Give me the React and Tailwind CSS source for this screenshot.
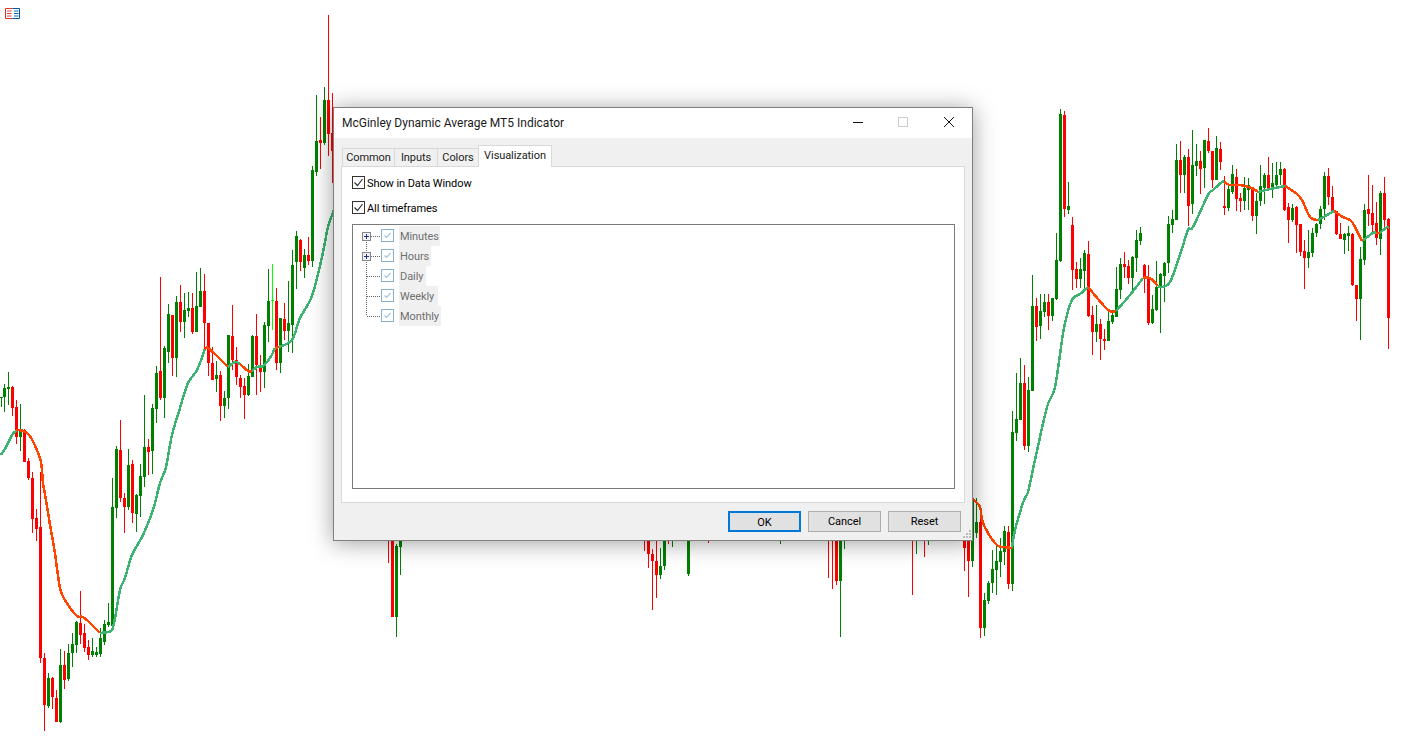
import React from 'react';

const UP = '#008000';
const DOWN = '#ff0000';

// [x, wickTop, bodyTop, bodyBottom, wickBottom, colour]
const CANDLES = [
  [1, 397, 397, 398, 407, 'g'], [4, 384, 388, 397, 412, 'g'], [8, 372, 387, 389, 405, 'g'], [12, 386, 387, 408, 416, 'r'],
  [16, 400, 407, 437, 444, 'r'], [20, 404, 430, 437, 451, 'g'], [24, 429, 431, 462, 462, 'r'], [28, 458, 461, 478, 480, 'r'],
  [32, 472, 478, 519, 533, 'r'], [36, 509, 518, 529, 541, 'r'], [40, 472, 527, 658, 663, 'r'], [44, 653, 658, 705, 731, 'r'],
  [48, 673, 678, 706, 708, 'g'], [52, 677, 678, 697, 709, 'r'], [56, 690, 698, 722, 722, 'r'], [60, 649, 665, 722, 723, 'g'],
  [64, 651, 665, 680, 689, 'r'], [68, 644, 653, 679, 681, 'g'], [72, 633, 644, 653, 667, 'g'], [76, 621, 622, 645, 653, 'g'],
  [80, 591, 623, 635, 644, 'r'], [84, 624, 633, 648, 652, 'r'], [88, 640, 647, 655, 660, 'r'], [92, 638, 651, 655, 657, 'g'],
  [96, 647, 652, 655, 657, 'g'], [100, 628, 638, 654, 657, 'g'], [104, 620, 624, 642, 645, 'g'], [108, 603, 622, 625, 627, 'g'],
  [112, 478, 507, 626, 627, 'g'], [116, 446, 449, 508, 518, 'g'], [120, 420, 450, 498, 502, 'r'], [124, 493, 498, 507, 533, 'r'],
  [128, 449, 465, 507, 510, 'g'], [132, 460, 464, 513, 523, 'r'], [136, 494, 495, 514, 532, 'g'], [140, 464, 476, 496, 517, 'g'],
  [144, 395, 447, 477, 487, 'g'], [148, 439, 447, 452, 475, 'r'], [152, 404, 408, 451, 474, 'g'], [156, 366, 373, 409, 423, 'g'],
  [160, 277, 371, 398, 400, 'r'], [164, 346, 348, 398, 418, 'g'], [168, 304, 314, 352, 363, 'g'], [172, 315, 315, 358, 376, 'r'],
  [176, 296, 302, 358, 377, 'g'], [180, 285, 302, 322, 332, 'r'], [184, 293, 310, 322, 338, 'g'], [188, 292, 308, 311, 317, 'g'],
  [192, 293, 308, 332, 334, 'r'], [196, 272, 306, 332, 332, 'g'], [200, 268, 291, 307, 307, 'g'], [204, 274, 291, 323, 350, 'r'],
  [208, 323, 323, 363, 376, 'r'], [212, 347, 363, 380, 380, 'r'], [216, 361, 375, 379, 392, 'g'], [220, 371, 375, 406, 421, 'r'],
  [224, 391, 398, 406, 418, 'g'], [228, 335, 335, 398, 409, 'g'], [232, 305, 336, 360, 370, 'r'], [236, 347, 360, 377, 385, 'r'],
  [240, 375, 378, 387, 398, 'r'], [244, 378, 386, 395, 419, 'r'], [248, 364, 376, 395, 396, 'g'], [252, 335, 336, 377, 377, 'g'],
  [256, 314, 336, 365, 395, 'r'], [260, 355, 365, 372, 392, 'r'], [264, 322, 325, 372, 388, 'g'], [268, 269, 301, 326, 342, 'g'],
  [276, 288, 301, 363, 370, 'r'], [280, 318, 318, 363, 373, 'g'], [284, 303, 319, 331, 340, 'r'], [288, 281, 323, 331, 352, 'g'],
  [292, 250, 265, 325, 353, 'g'], [296, 231, 236, 262, 289, 'g'], [300, 239, 240, 262, 271, 'r'], [304, 249, 255, 268, 278, 'g'],
  [308, 237, 255, 261, 265, 'r'], [312, 166, 170, 261, 267, 'g'], [316, 95, 141, 172, 176, 'g'], [320, 117, 140, 143, 169, 'r'],
  [324, 87, 100, 143, 145, 'g'], [328, 15, 100, 134, 156, 'r'], [332, 93, 133, 151, 183, 'r'],
  // under the dialog
  [388, 500, 500, 501, 563, 'r'], [392, 500, 500, 617, 617, 'r'], [396, 544, 546, 617, 637, 'g'], [400, 500, 500, 547, 575, 'g'],
  [644, 500, 500, 501, 551, 'r'], [648, 500, 500, 554, 568, 'r'], [652, 549, 554, 561, 610, 'r'], [656, 541, 561, 575, 598, 'r'],
  [660, 548, 566, 575, 579, 'g'], [664, 500, 500, 566, 570, 'g'], [668, 500, 500, 501, 544, 'r'], [672, 500, 500, 501, 547, 'g'],
  [688, 500, 500, 574, 576, 'g'], [696, 500, 500, 501, 541, 'r'], [708, 500, 500, 501, 543, 'r'], [780, 500, 500, 501, 544, 'g'],
  [828, 500, 500, 501, 578, 'r'], [832, 500, 500, 501, 589, 'r'], [836, 500, 500, 581, 585, 'r'], [840, 500, 500, 581, 637, 'g'],
  [844, 500, 500, 501, 549, 'g'], [912, 500, 500, 501, 595, 'r'], [916, 500, 500, 501, 554, 'g'], [924, 500, 500, 501, 557, 'r'],
  [928, 500, 500, 501, 545, 'g'], [964, 500, 500, 548, 571, 'r'], [968, 500, 500, 561, 597, 'r'], [972, 498, 500, 561, 567, 'g'],
  // right of the dialog
  [976, 498, 522, 533, 538, 'g'], [980, 512, 522, 628, 638, 'r'], [984, 593, 600, 628, 636, 'g'], [988, 581, 583, 601, 604, 'g'],
  [992, 550, 569, 583, 593, 'g'], [996, 546, 561, 570, 595, 'g'], [1000, 538, 551, 562, 577, 'g'], [1004, 526, 531, 552, 565, 'g'],
  [1008, 526, 532, 584, 589, 'r'], [1012, 411, 432, 584, 591, 'g'], [1016, 373, 419, 433, 441, 'g'], [1020, 358, 383, 420, 420, 'g'],
  [1024, 365, 383, 446, 450, 'r'], [1028, 377, 390, 446, 452, 'g'], [1032, 275, 306, 391, 391, 'g'], [1036, 298, 306, 327, 341, 'r'],
  [1040, 294, 311, 326, 339, 'g'], [1044, 294, 302, 312, 317, 'g'], [1048, 294, 302, 316, 330, 'r'], [1052, 298, 298, 316, 321, 'g'],
  [1056, 233, 260, 299, 300, 'g'], [1060, 109, 114, 261, 262, 'g'], [1064, 111, 115, 209, 217, 'r'], [1068, 182, 206, 210, 214, 'g'],
  [1072, 217, 225, 270, 290, 'r'], [1076, 262, 269, 279, 288, 'r'], [1080, 258, 269, 279, 288, 'g'], [1084, 250, 253, 271, 288, 'g'],
  [1088, 241, 254, 316, 317, 'r'], [1092, 306, 315, 332, 355, 'r'], [1096, 305, 324, 332, 342, 'g'], [1100, 319, 324, 339, 360, 'r'],
  [1104, 329, 339, 341, 350, 'r'], [1108, 309, 321, 341, 341, 'g'], [1112, 310, 315, 322, 324, 'g'], [1116, 267, 289, 317, 317, 'g'],
  [1120, 258, 264, 290, 299, 'g'], [1124, 252, 264, 267, 278, 'r'], [1128, 260, 266, 278, 284, 'r'], [1132, 256, 257, 278, 293, 'g'],
  [1136, 230, 240, 258, 272, 'g'], [1140, 227, 233, 241, 245, 'g'], [1144, 264, 265, 277, 293, 'r'], [1148, 265, 277, 323, 325, 'r'],
  [1152, 295, 309, 323, 324, 'g'], [1156, 261, 287, 310, 311, 'g'], [1160, 273, 274, 287, 333, 'g'], [1164, 262, 263, 276, 302, 'g'],
  [1168, 216, 224, 263, 273, 'g'], [1172, 210, 219, 225, 233, 'g'], [1176, 144, 160, 220, 220, 'g'], [1180, 141, 160, 175, 193, 'r'],
  [1184, 155, 157, 175, 193, 'g'], [1188, 149, 157, 206, 226, 'r'], [1192, 130, 165, 204, 214, 'g'], [1196, 144, 161, 166, 176, 'g'],
  [1200, 151, 161, 169, 194, 'r'], [1204, 140, 140, 168, 188, 'g'], [1208, 128, 141, 151, 153, 'r'], [1212, 151, 151, 180, 188, 'r'],
  [1216, 136, 148, 180, 180, 'g'], [1220, 142, 149, 162, 170, 'r'], [1224, 176, 206, 208, 215, 'r'], [1228, 183, 189, 208, 211, 'g'],
  [1232, 165, 174, 192, 194, 'g'], [1236, 169, 177, 199, 211, 'r'], [1240, 193, 198, 201, 212, 'r'], [1244, 177, 188, 201, 210, 'g'],
  [1248, 178, 185, 190, 210, 'g'], [1252, 188, 188, 216, 221, 'r'], [1256, 193, 201, 216, 234, 'g'], [1260, 165, 186, 201, 206, 'g'],
  [1264, 173, 175, 188, 204, 'g'], [1268, 157, 175, 189, 189, 'r'], [1272, 163, 183, 189, 198, 'g'], [1276, 162, 175, 185, 189, 'g'],
  [1280, 162, 169, 175, 185, 'g'], [1284, 168, 169, 210, 211, 'r'], [1288, 203, 207, 220, 243, 'r'], [1292, 204, 208, 220, 222, 'g'],
  [1296, 206, 207, 225, 253, 'r'], [1300, 224, 224, 252, 256, 'r'], [1304, 240, 251, 258, 289, 'r'], [1308, 230, 252, 258, 268, 'g'],
  [1312, 228, 233, 253, 257, 'g'], [1316, 223, 224, 233, 237, 'g'], [1320, 206, 209, 224, 229, 'g'], [1324, 172, 176, 209, 220, 'g'],
  [1328, 168, 176, 197, 205, 'r'], [1332, 186, 197, 211, 212, 'r'], [1336, 211, 211, 234, 235, 'r'], [1340, 223, 234, 239, 239, 'r'],
  [1344, 233, 234, 240, 254, 'g'], [1348, 226, 233, 236, 251, 'g'], [1352, 233, 234, 285, 286, 'r'], [1356, 285, 285, 299, 321, 'r'],
  [1360, 247, 259, 299, 340, 'g'], [1364, 204, 210, 260, 265, 'g'], [1368, 175, 209, 214, 226, 'r'], [1372, 185, 213, 225, 233, 'r'],
  [1376, 202, 223, 238, 245, 'r'], [1380, 191, 193, 239, 255, 'g'], [1384, 177, 193, 220, 228, 'r'], [1388, 218, 219, 318, 349, 'r'],
];

const GREEN_LINES = [
  [[1, 455], [6, 447], [12, 435], [16, 431]],
  [[100, 633], [108, 632], [112, 630], [115, 618], [120, 590], [125, 578], [132, 555], [143, 535], [153, 510], [160, 483], [166, 467], [172, 435], [180, 408], [188, 383], [197, 370], [205, 349]],
  [[228, 367], [235, 362], [240, 364]],
  [[252, 371], [257, 367], [263, 366], [270, 358], [275, 348]],
  [[279, 347], [292, 340], [300, 318], [312, 296], [322, 257], [328, 227], [334, 210]],
  [[1012, 548], [1015, 530], [1024, 500], [1028, 492], [1035, 460], [1047, 407], [1055, 387], [1064, 328], [1072, 300], [1080, 294], [1088, 287]],
  [[1116, 311], [1130, 295], [1143, 278]],
  [[1158, 286], [1162, 287], [1170, 282], [1180, 255], [1188, 230], [1193, 227], [1208, 195], [1213, 190], [1222, 182], [1224, 182]],
  [[1258, 192], [1270, 189], [1285, 186]],
  [[1318, 220], [1327, 215], [1334, 211]],
  [[1362, 241], [1373, 233], [1376, 233]],
  [[1380, 233], [1387, 227], [1389, 228]],
];

const ORANGE_LINES = [
  [[16, 430], [24, 431], [30, 436], [36, 448], [41, 462], [43, 483], [46, 500], [50, 525], [54, 547], [58, 575], [61, 592], [68, 605], [77, 616], [83, 617], [90, 623], [100, 633]],
  [[205, 349], [208, 348], [218, 357], [228, 367]],
  [[240, 364], [248, 371], [252, 371]],
  [[275, 348], [279, 347]],
  [[972, 498], [980, 507], [982, 520], [988, 533], [997, 545], [1003, 547], [1012, 548]],
  [[1088, 287], [1108, 310], [1116, 311]],
  [[1143, 278], [1150, 278], [1158, 286]],
  [[1224, 182], [1230, 185], [1240, 185], [1252, 188], [1258, 192]],
  [[1285, 186], [1297, 194], [1302, 200], [1310, 217], [1318, 220]],
  [[1334, 211], [1343, 217], [1352, 222], [1362, 241]],
  [[1376, 233], [1380, 233]],
];

// catmull-rom through the sampled points so the average doesn't look angular
const smooth = (pts) => {
  let d = `M${pts[0][0]} ${pts[0][1]}`;
  for (let i = 0; i < pts.length - 1; i++) {
    const p0 = pts[i - 1] || pts[i];
    const p1 = pts[i];
    const p2 = pts[i + 1];
    const p3 = pts[i + 2] || p2;
    const c1 = [p1[0] + (p2[0] - p0[0]) / 6, p1[1] + (p2[1] - p0[1]) / 6];
    const c2 = [p2[0] - (p3[0] - p1[0]) / 6, p2[1] - (p3[1] - p1[1]) / 6];
    d += `C${c1[0]} ${c1[1]} ${c2[0]} ${c2[1]} ${p2[0]} ${p2[1]}`;
  }
  return d;
};

const Chart = () => (
  <svg className="absolute inset-0" width="1402" height="755" shapeRendering="crispEdges">
    {CANDLES.map(([x, wickTop, bodyTop, bodyBottom, wickBottom, c]) => (
      <g key={x} fill={c === 'g' ? UP : DOWN}>
        <rect x={x} y={wickTop} width="1" height={wickBottom - wickTop} />
        <rect x={x - 1} y={bodyTop} width="3" height={bodyBottom - bodyTop} />
      </g>
    ))}
    <rect x="272" y="264" width="1" height="66" fill="#00ff00" />
    <rect x="271" y="300" width="3" height="1" fill="#00ff00" />
    <g fill="none" strokeWidth="2.5">
      {GREEN_LINES.map((p) => <path key={p[0].join()} d={smooth(p)} stroke="#3cb371" />)}
      {ORANGE_LINES.map((p) => <path key={p[0].join()} d={smooth(p)} stroke="#ff4500" />)}
    </g>
  </svg>
);

const Logo = () => (
  <svg className="absolute left-[5px] top-[8px]" width="15" height="11" viewBox="0 0 15 11" fill="none">
    <path d="M7.5.5H.5v10h7" stroke="#e62e24" />
    <path d="M7.5.5h7v10h-7" stroke="#0057a8" />
    <path d="M2 3h4.5M2 5.5h4.5M2 8h4.5" stroke="#d8443a" />
    <path d="M9 3h4.5M9 5.5h4.5M9 8h4.5" stroke="#1468b4" />
  </svg>
);

const Tab = ({ label, active, className }) => (
  <div
    className={`flex justify-center border-t border-l border-r border-[#d9d9d9] ${
      active ? 'h-[22px] bg-white items-start pt-[2px] relative z-10 -mb-px' : 'h-[18px] bg-[#f0f0f0] items-center pt-[2px] -ml-px'
    } ${className}`}
  >
    {label}
  </div>
);

const CheckRow = ({ label, className }) => (
  <div className={`flex items-center h-[14px] ${className}`}>
    <svg width="14" height="14" viewBox="0 0 14 14" fill="none" className="shrink-0">
      <rect x="0.5" y="0.5" width="12" height="12" fill="#fff" stroke="#333" />
      <path d="M2.5 6.5l3 3 5-6.5" stroke="#333" strokeWidth="1.2" />
    </svg>
    <span className="ml-[1px] translate-y-px text-black">{label}</span>
  </div>
);

const TreeRow = ({ label, width, plus, last, first }) => (
  <div className="flex items-center h-5">
    <svg width="28" height="20" viewBox="0 0 28 20" fill="none" className="shrink-0">
      <path
        d={last ? 'M13.5 0v10' : first ? 'M13.5 10v10' : 'M13.5 0v20'}
        stroke="#666"
        strokeDasharray="1 1"
      />
      <path d="M14 10.5h13" stroke="#666" strokeDasharray="1 1" />
      {plus && (
        <g>
          <rect x="9.5" y="6.5" width="8" height="8" fill="#eef0f4" stroke="#85858f" />
          <path d="M11 10.5h5M13.5 8v5" stroke="#24347c" />
        </g>
      )}
    </svg>
    <svg width="14" height="14" viewBox="0 0 14 14" fill="none" className="shrink-0">
      <rect x="0.5" y="0.5" width="12" height="12" fill="#fff" stroke="#86b0d2" />
      <path d="M3.5 6.5l2 2 4-4.5" stroke="#a9c4da" strokeWidth="1.2" />
    </svg>
    <span
      className="ml-[4px] h-5 leading-[22px] pl-[1px] bg-[#f0f0f0] text-[#6f6f6f]"
      style={{ width }}
    >
      {label}
    </span>
  </div>
);

const Button = ({ label, primary }) => (
  <button
    className={`w-[73px] h-[21px] bg-[#e1e1e1] pt-[2px] text-black ${
      primary ? 'border-2 border-[#0078d7]' : 'border border-[#adadad]'
    }`}
  >
    {label}
  </button>
);

export default function App() {
  return (
    <div className="relative h-[755px] w-[1402px] overflow-hidden bg-white">
      <Chart />
      <Logo />

      <div className="absolute left-[333px] top-[107px] flex h-[434px] w-[640px] flex-col border border-[#7f7f7f] bg-[#f0f0f0] font-['Roboto',sans-serif] text-[11px] tracking-[-0.08px] shadow-[0_2px_22px_rgba(0,0,0,0.38)]">
        <div className="flex h-[30px] shrink-0 items-center bg-white pl-[8px] pr-[18px]">
          <span className="text-[12px] tracking-normal text-[#1a1a1a]">McGinley Dynamic Average MT5 Indicator</span>
          <div className="mb-[2px] ml-auto flex items-center gap-[35px]">
            <svg width="10" height="10" viewBox="0 0 10 10"><path d="M0 5.5h10" stroke="#111" /></svg>
            <svg width="10" height="10" viewBox="0 0 10 10" fill="none"><rect x="0.5" y="0.5" width="9" height="9" stroke="#ccc" /></svg>
            <svg className="ml-[1px]" width="10" height="10" viewBox="0 0 10 10"><path d="M0 0l10 10M10 0L0 10" stroke="#111" /></svg>
          </div>
        </div>

        <div className="ml-[7px] mr-[7px] flex h-[28px] items-end pl-[1px] text-[#222]">
          <Tab label="Common" className="ml-0 w-[53px]" />
          <Tab label="Inputs" className="w-[44px]" />
          <Tab label="Colors" className="w-[42px]" />
          <Tab label="Visualization" active className="-ml-px w-[74px]" />
        </div>

        <div className="mx-[7px] flex h-[337px] flex-col border border-[#d9d9d9] bg-white pl-[10px] pr-[9px] pt-[9px]">
          <CheckRow label="Show in Data Window" />
          <CheckRow label="All timeframes" className="mt-[11px]" />
          <div className="mt-[9px] h-[265px] border border-[#7a7a7a] pt-[1px]">
            <TreeRow label="Minutes" width={41} plus first />
            <TreeRow label="Hours" width={32} plus />
            <TreeRow label="Daily" width={27} />
            <TreeRow label="Weekly" width={39} />
            <TreeRow label="Monthly" width={42} last />
          </div>
        </div>

        <div className="relative flex flex-1 items-start justify-end gap-[7px] pr-[11px] pt-[8px]">
          <Button label="OK" primary />
          <Button label="Cancel" />
          <Button label="Reset" />
          <svg className="absolute bottom-[1px] right-0" width="10" height="10" viewBox="0 0 10 10" fill="#bcbcbc">
            <rect x="7" y="1" width="2" height="2" />
            <rect x="4" y="4" width="2" height="2" />
            <rect x="7" y="4" width="2" height="2" />
            <rect x="1" y="7" width="2" height="2" />
            <rect x="4" y="7" width="2" height="2" />
            <rect x="7" y="7" width="2" height="2" />
          </svg>
        </div>
      </div>
    </div>
  );
}
